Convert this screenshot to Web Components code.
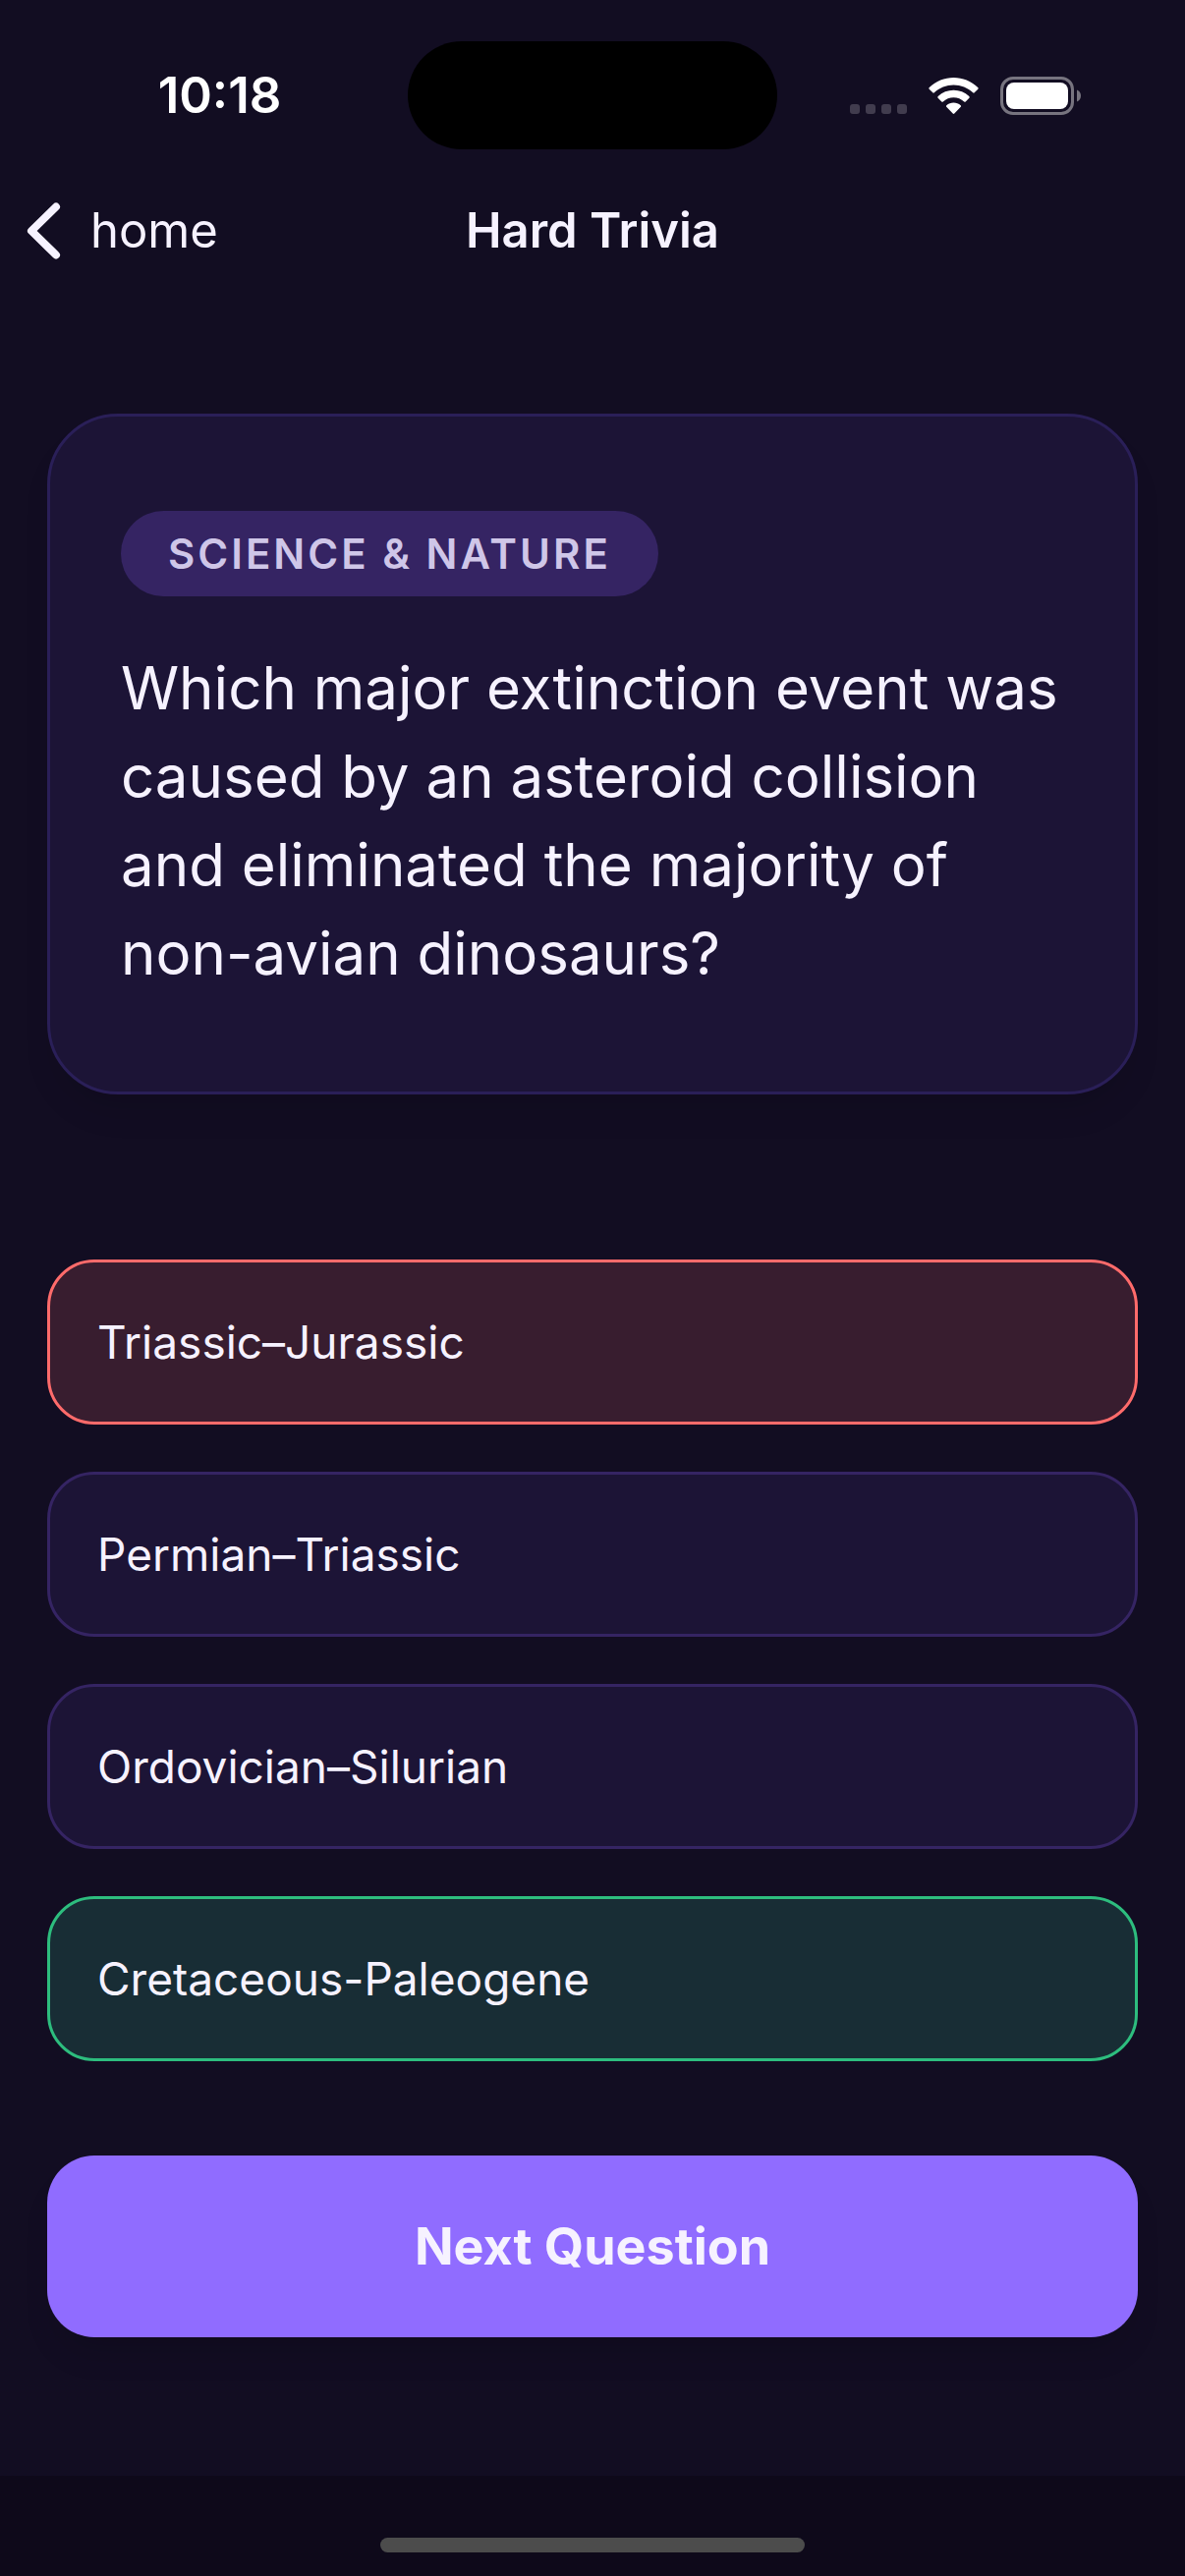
<!DOCTYPE html>
<html lang="en">
<head>
<meta charset="utf-8">
<meta name="viewport" content="width=device-width, initial-scale=1">
<title>Hard Trivia</title>
<style>
  :root {
    --bg: #120d22;
    --bg-footer: #0e091a;
    --surface: #1c1436;
    --surface-line: #2a1f58;
    --accent-dim: #352463;
    --accent: #906cff;
    --text: #f6f2ff;
    --text-soft: #cfc6e8;
    --wrong: #ff6b6b;
    --wrong-fill: #381d2f;
    --right: #2dbd7e;
    --right-fill: #182d35;
    --drop: 0 24px 36px -12px rgba(0, 0, 0, .14);
  }
  html, body { margin: 0; background: var(--bg); }
  body { font-family: Inter, "Liberation Sans", sans-serif; color: var(--text); }
</style>
</head>
<body>
<trivia-screen>
  <status-bar slot="top" time="10:18"></status-bar>
  <nav-header slot="top" back="home">Hard Trivia</nav-header>
  <question-card category="Science &amp; Nature">Which major extinction event was caused by an asteroid collision and eliminated the majority of non-avian dinosaurs?</question-card>
  <answer-list>
    <answer-option state="wrong">Triassic–Jurassic</answer-option>
    <answer-option>Permian–Triassic</answer-option>
    <answer-option>Ordovician–Silurian</answer-option>
    <answer-option state="right">Cretaceous-Paleogene</answer-option>
  </answer-list>
  <primary-button>Next Question</primary-button>
  <home-indicator slot="bottom"></home-indicator>
</trivia-screen>

<script>
  const define = (name, render) => customElements.define(name, class extends HTMLElement {
    constructor() {
      super();
      this.attachShadow({ mode: "open" });
    }
    connectedCallback() {
      this.shadowRoot.innerHTML = render(this);
    }
  });

  define("trivia-screen", () => `
    <style>
      :host { display: flex; flex-direction: column; min-height: 100vh; background: var(--bg); }
      main { flex: 1; display: flex; flex-direction: column; padding: 103px 48px 48px; }
    </style>
    <slot name="top"></slot>
    <main><slot></slot></main>
    <slot name="bottom"></slot>`);

  define("status-bar", el => `
    <style>
      :host { display: grid; grid-template-columns: 1fr 376px 1fr; align-items: center; padding: 42px 32px 0; color: #fff; }
      time { text-align: center; font-size: 51px; line-height: 62px; font-weight: 600; }
      .island { height: 110px; border-radius: 55px; background: #000; }
      .icons { display: flex; justify-content: center; gap: 22px; }
      svg { display: block; }
    </style>
    <time>${el.getAttribute("time")}</time>
    <div class="island"></div>
    <div class="icons">
      <svg width="58" height="39" viewBox="0 0 58 39" fill="#413c4e" aria-hidden="true">
        <rect y="28" width="10" height="10" rx="3"/><rect x="16" y="28" width="10" height="10" rx="3"/>
        <rect x="32" y="28" width="10" height="10" rx="3"/><rect x="48" y="28" width="10" height="10" rx="3"/>
      </svg>
      <svg width="51" height="39" viewBox="0 0 51 39" fill="#fff" aria-hidden="true">
        <path d="M25.500 1C34.600 1 43.400 4.500 50.200 10.900Q51.100 11.800 50.300 12.700L46.700 16.300Q46 17 45.200 16.300C39.900 11.300 32.900 8.500 25.500 8.500S11.100 11.300 5.800 16.300Q5 17 4.300 16.300L.7 12.700Q-.1 11.800 .8 10.900C7.600 4.500 16.400 1 25.500 1Z"/>
        <path d="M25.500 13.800C31.400 13.800 37 16 41.300 20.100Q42.200 21 41.400 21.800L37.700 25.400Q37 26.100 36.200 25.400C33.300 22.700 29.500 21.200 25.500 21.200S17.700 22.700 14.800 25.400Q14 26.100 13.300 25.400L9.600 21.800Q8.800 21 9.700 20.100C14 16 19.600 13.800 25.500 13.800Z"/>
        <path d="M25.500 26.500C28.200 26.500 30.700 27.500 32.700 29.200Q33.500 30 32.800 30.700L26.300 37.500Q25.500 38.300 24.700 37.500L18.200 30.700Q17.500 30 18.300 29.200C20.300 27.500 22.800 26.500 25.500 26.500Z"/>
      </svg>
      <svg width="82" height="39" viewBox="0 0 82 39" aria-hidden="true">
        <rect x="1.500" y="1.500" width="72" height="36" rx="11.500" fill="none" stroke="#77747f" stroke-width="3"/>
        <rect x="6" y="6" width="63" height="27" rx="8" fill="#fff"/>
        <path d="M78 13.500C80.500 14.500 82 16.800 82 19.500S80.500 24.500 78 25.500Z" fill="#77747f"/>
      </svg>
    </div>`);

  define("nav-header", el => `
    <style>
      :host { display: grid; grid-template-columns: 1fr auto 1fr; align-items: center; padding: 52px 24px; font-size: 49px; line-height: 62px; }
      a { justify-self: start; display: flex; align-items: center; gap: 28px; color: inherit; text-decoration: none; }
      h1 { margin: 0; font-size: inherit; font-weight: 600; }
      svg { display: block; }
    </style>
    <a href="#home">
      <svg width="40" height="60" viewBox="0 0 40 60" fill="none" stroke="currentColor" stroke-width="8" stroke-linecap="round" stroke-linejoin="round" aria-hidden="true"><path d="M33 5.500 8 30 33 54.500"/></svg>
      <span>${el.getAttribute("back")}</span>
    </a>
    <h1><slot></slot></h1>`);

  define("question-card", el => `
    <style>
      :host { display: flex; flex-direction: column; align-items: flex-start; gap: 48px; padding: 96px 72px;
        border: 3px solid var(--surface-line); border-radius: 72px; background: var(--surface);
        box-shadow: var(--drop); }
      .tag { padding: 18px 48px; border-radius: 44px; background: var(--accent-dim); color: var(--text-soft);
        font-size: 42px; line-height: 51px; font-weight: 600; letter-spacing: 3px; text-transform: uppercase; }
      p { margin: 0; font-size: 60px; line-height: 90px; }
    </style>
    <span class="tag">${el.getAttribute("category").replace("&", "&amp;")}</span>
    <p><slot></slot></p>`);

  define("answer-list", () => `
    <style>
      :host { display: flex; flex-direction: column; gap: 48px; margin: 168px 0 96px; }
    </style>
    <slot></slot>`);

  define("answer-option", () => `
    <style>
      :host { display: block; --fill: var(--surface); --line: var(--accent-dim); }
      :host([state="wrong"]) { --fill: var(--wrong-fill); --line: var(--wrong); }
      :host([state="right"]) { --fill: var(--right-fill); --line: var(--right); }
      button { display: block; box-sizing: border-box; width: 100%; margin: 0; padding: 51px 48px; text-align: left;
        border: 3px solid var(--line); border-radius: 48px; background: var(--fill); color: var(--text);
        font: 400 46px/60px Inter, "Liberation Sans", sans-serif; }
    </style>
    <button type="button"><slot></slot></button>`);

  define("primary-button", () => `
    <style>
      :host { display: block; }
      button { display: block; width: 100%; margin: 0; padding: 60px 48px; border: 0; border-radius: 48px;
        background: var(--accent); color: var(--text); box-shadow: var(--drop);
        font: 700 52px/65px Inter, "Liberation Sans", sans-serif; }
    </style>
    <button type="button"><slot></slot></button>`);

  define("home-indicator", () => `
    <style>
      :host { display: flex; justify-content: center; padding: 63px 0 24px; background: var(--bg-footer); }
      div { width: 432px; height: 15px; border-radius: 8px; background: #4c4c4c; }
    </style>
    <div></div>`);
</script>
</body>
</html>
